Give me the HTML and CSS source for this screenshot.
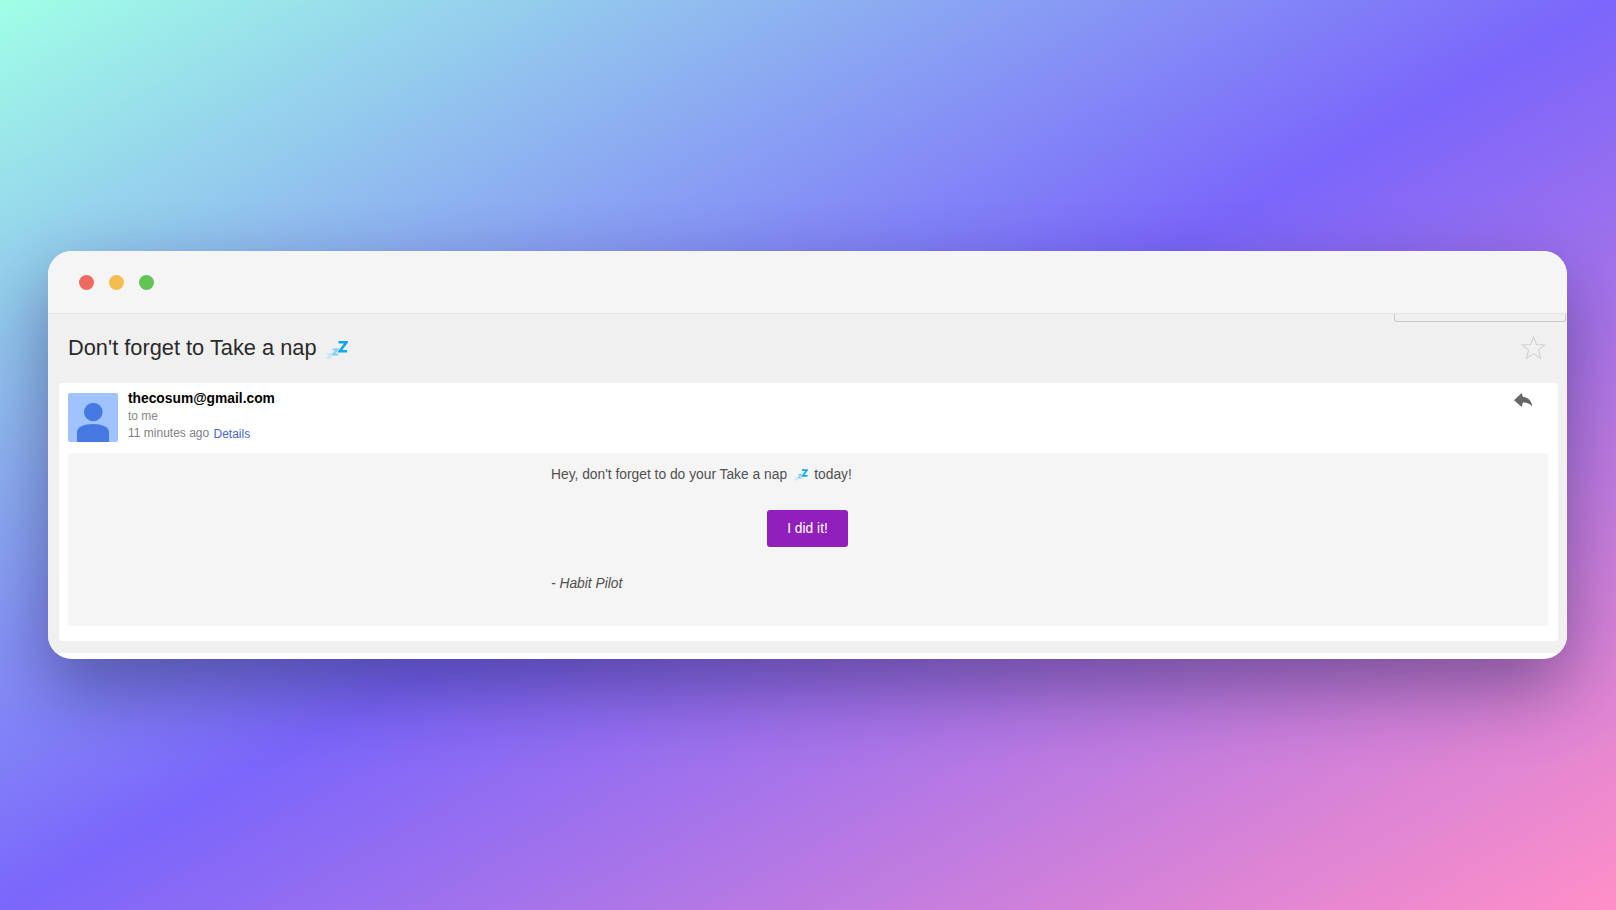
FILE: index.html
```html
<!DOCTYPE html>
<html lang="en">
<head>
<meta charset="utf-8">
<title>Don't forget to Take a nap</title>
<link rel="stylesheet" href="styles.css">
</head>
<body>
<svg class="defs" width="0" height="0" aria-hidden="true">
  <symbol id="zzz" viewBox="0 0 22 18">
    <path d="M1 12.800h4.200l-3.900 3.900h4.400" fill="none" stroke="#c4e6fb" stroke-width="1.500"/>
    <path d="M6.500 8.300h5l-4.600 5.200h5.200" fill="none" stroke="#7fcdf6" stroke-width="1.800"/>
    <path d="M12.500 1.300h8l-6.800 9h7.400" fill="none" stroke="#0fa8ee" stroke-width="2.600"/>
  </symbol>
</svg>
<main class="window">
  <header class="titlebar">
    <span class="dot dot-red"></span>
    <span class="dot dot-yellow"></span>
    <span class="dot dot-green"></span>
  </header>
  <section class="mail">
    <div class="tab"></div>
    <div class="subject">
      <h1 class="subject-text">Don't forget to Take a nap <svg class="zzz-large"><use href="#zzz"/></svg></h1>
      <svg class="star" viewBox="0 0 24 24"><path d="M12 1.800l2.900 7.300 7.800.5-6 5 2 7.600-6.700-4.200-6.700 4.200 2-7.600-6-5 7.800-.5z" fill="none" stroke="#cfcfcf" stroke-width="1"/></svg>
    </div>
    <article class="card">
      <div class="meta">
        <svg class="avatar" viewBox="0 0 50 49">
          <rect width="50" height="49" rx="2" fill="#a0c3ff"/>
          <circle cx="25.300" cy="19" r="9.300" fill="#4779e2"/>
          <path d="M9 49V39c0-5 7-8 16-8s16 3 16 8v10z" fill="#4779e2"/>
        </svg>
        <div class="sender">
          <div class="email">thecosum@gmail.com</div>
          <div class="to">to me</div>
          <div class="time">11 minutes ago <a class="details">Details</a></div>
        </div>
        <svg class="reply" viewBox="0 0 55 41"><path d="M0 21L23 0l3 11c19 2 26 14 29 30-8-10-17-13-29-13l-3 13z" fill="#666"/></svg>
      </div>
      <div class="body">
        <div class="content">
          <p class="greeting">Hey, don't forget to do your Take a nap <svg class="zzz-small"><use href="#zzz"/></svg> today!</p>
          <div class="action"><a class="button">I did it!</a></div>
          <p class="sign">- Habit Pilot</p>
        </div>
      </div>
    </article>
  </section>
</main>
</body>
</html>
```

FILE: styles.css
```css
* { box-sizing: border-box; }
html, body { margin: 0; height: 910px; overflow: hidden; }
body {
  padding: 251px 0 0 48px;
  background: linear-gradient(to bottom right, #a0ffe6 0%, #7b66fb 50%, #ff8fc7 100%);
  font-family: "Liberation Sans", Arial, sans-serif;
}
.defs { position: absolute; }
.window {
  width: 1519px;
  height: 408px;
  border-radius: 24px;
  overflow: hidden;
  background: #fff;
  box-shadow: 0 30px 70px rgba(20, 20, 60, .42);
  display: flex;
  flex-direction: column;
}
.titlebar {
  height: 63px;
  flex: none;
  background: #f5f5f5;
  border-bottom: 1px solid #e6e6e6;
  display: flex;
  align-items: center;
  gap: 15px;
  padding: 1px 0 0 31px;
}
.dot { width: 15px; height: 15px; border-radius: 50%; }
.dot-red { background: #ee695e; }
.dot-yellow { background: #f5bd4f; }
.dot-green { background: #61c454; }
.mail {
  position: relative;
  height: 339px;
  flex: none;
  background: #f0f0f0;
  padding: 0 9px 0 11px;
}
.tab {
  position: absolute;
  top: 0;
  right: 1px;
  width: 172px;
  height: 8px;
  border: 1px solid #c8c8c8;
  border-top: 0;
  border-radius: 0 0 3px 3px;
}
.subject {
  height: 69px;
  display: flex;
  align-items: center;
  justify-content: space-between;
  padding: 0 12px 0 9px;
}
.subject-text {
  margin: 0 0 2px;
  font-size: 21.800px;
  font-weight: 400;
  color: #2a2a2a;
  display: flex;
  align-items: center;
  gap: 6px;
}
.zzz-large { width: 22px; height: 18px; margin-left: 3px; margin-top: 5px; }
.star { width: 25px; height: 25px; margin-bottom: 3px; }
.card {
  height: 258px;
  background: #fff;
  border-radius: 3px;
  padding: 10px 10px 0 9px;
}
.meta {
  position: relative;
  height: 60px;
  display: flex;
  gap: 10px;
}
.avatar { width: 50px; height: 49px; flex: none; }
.sender { margin-top: -4px; }
.email { font-size: 13.800px; font-weight: 700; color: #000; line-height: 19px; }
.to { font-size: 12px; color: #888; line-height: 17px; }
.time { font-size: 12px; color: #808080; line-height: 17px; }
.details { font-size: 12px; color: #4a66c8; margin-left: 1px; position: relative; top: 1px; }
.reply { position: absolute; top: 0; right: 16px; width: 18.500px; height: 14px; }
.body {
  height: 173px;
  background: #f5f5f5;
  color: #505050;
  font-size: 13.800px;
  padding-left: 483px;
}
.content { width: 297px; }
.greeting { margin: 0; padding-top: 13px; line-height: 17px; white-space: nowrap; }
.zzz-small { width: 14px; height: 12px; vertical-align: -2px; margin: 0 2.500px 0 3px; }
.action { display: flex; justify-content: flex-end; padding-top: 27px; }
.button {
  width: 81px;
  height: 37px;
  background: #901fbb;
  border-radius: 3px;
  color: #fff;
  display: flex;
  align-items: center;
  justify-content: center;
}
.sign { margin: 28px 0 0; font-style: italic; line-height: 17px; }
```
